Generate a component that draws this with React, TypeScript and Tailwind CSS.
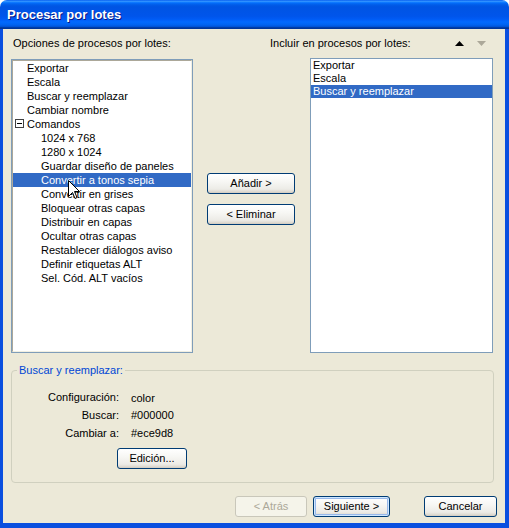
import React from "react";

const leftItems: { label: string; level: number; tree?: boolean; selected?: boolean }[] = [
  { label: "Exportar", level: 0 },
  { label: "Escala", level: 0 },
  { label: "Buscar y reemplazar", level: 0 },
  { label: "Cambiar nombre", level: 0 },
  { label: "Comandos", level: 0, tree: true },
  { label: "1024 x 768", level: 1 },
  { label: "1280 x 1024", level: 1 },
  { label: "Guardar diseño de paneles", level: 1 },
  { label: "Convertir a tonos sepia", level: 1, selected: true },
  { label: "Convertir en grises", level: 1 },
  { label: "Bloquear otras capas", level: 1 },
  { label: "Distribuir en capas", level: 1 },
  { label: "Ocultar otras capas", level: 1 },
  { label: "Restablecer diálogos aviso", level: 1 },
  { label: "Definir etiquetas ALT", level: 1 },
  { label: "Sel. Cód. ALT vacíos", level: 1 },
];

const rightItems = [
  { label: "Exportar" },
  { label: "Escala" },
  { label: "Buscar y reemplazar", selected: true },
];

function XpButton({
  children,
  className = "",
  isDefault = false,
  disabled = false,
}: {
  children: React.ReactNode;
  className?: string;
  isDefault?: boolean;
  disabled?: boolean;
}) {
  if (disabled) {
    return (
      <div
        className={
          "h-[21px] flex items-center justify-center rounded-[3px] border border-[#c9c7ba] bg-[#f5f4ea] text-[#aca899] " +
          className
        }
      >
        {children}
      </div>
    );
  }
  return (
    <div
      className={
        "h-[21px] flex items-center justify-center rounded-[3px] border border-[#003c74] bg-[linear-gradient(180deg,#ffffff_0%,#f7f7f4_40%,#ecebe6_80%,#d6d0c5_100%)] text-black " +
        (isDefault ? "shadow-[inset_0_0_0_1px_#cee7ff,inset_0_0_0_2px_#98b8ea] " : "shadow-[inset_0_-1px_0_#d6d0c5] ") +
        className
      }
    >
      {children}
    </div>
  );
}

export default function App() {
  return (
    <div className="w-[509px] h-[528px] flex flex-col bg-white font-['Liberation_Sans',Arial,sans-serif] text-[11px] leading-[13px] text-black">
      {/* Title bar */}
      <div className="h-[29px] shrink-0 rounded-t-[7px] flex items-center pl-[7px] bg-[linear-gradient(180deg,#0058ee_0%,#3593ff_4%,#288eff_6%,#127dff_8%,#036ffc_10%,#0262ee_14%,#0057e5_20%,#0054e3_24%,#0055eb_56%,#005bf5_66%,#026afe_76%,#0062ef_86%,#0052d6_92%,#0040ab_94%,#003092_100%)]">
        <span className="text-white font-bold text-[13px] leading-[16px] [text-shadow:1px_1px_0_#0a1883] pt-[1px]">
          Procesar por lotes
        </span>
      </div>

      {/* Body */}
      <div className="flex-1 flex flex-col bg-[#ece9d8] border-l-[3px] border-r-[4px] border-b-[5px] border-[#0a4fdf]">
        {/* Labels row */}
        <div className="h-[29px] shrink-0 flex items-center pl-[8px]">
          <div className="w-[259px] pl-[2px]">Opciones de procesos por lotes:</div>
          <div>Incluir en procesos por lotes:</div>
          <div className="ml-auto mr-[19px] flex items-center gap-[13px]">
            <svg width="9" height="5" viewBox="0 0 9 5">
              <path d="M4.5 0 L9 5 L0 5 Z" fill="#000" />
            </svg>
            <svg width="9" height="5" viewBox="0 0 9 5">
              <path d="M0 0 L9 0 L4.5 5 Z" fill="#aca899" />
            </svg>
          </div>
        </div>

        {/* Lists row */}
        <div className="h-[296px] shrink-0 flex pl-[8px]">
          <div className="w-[182px] h-[294px] mt-[1px] border border-[#7f9db9] bg-white">
            <div className="relative h-full border border-t-[#aca899] border-l-[#aca899] border-b-[#f1efe2] border-r-[#f1efe2]">
              {leftItems.map((it) => (
                <div
                  key={it.label}
                  className={
                    "relative h-[14px] leading-[14px] whitespace-nowrap " +
                    (it.selected ? "bg-[#316ac5] text-white " : "") +
                    (it.level === 0 ? "pl-[14px]" : "pl-[28px]")
                  }
                >
                  {it.tree && (
                    <span className="absolute left-[2px] top-[2px] w-[9px] h-[9px] border border-[#404040] bg-white flex items-center justify-center">
                      <span className="w-[5px] h-[1px] bg-black" />
                    </span>
                  )}
                  {it.label}
                </div>
              ))}
              {/* mouse cursor */}
              <svg
                className="absolute left-[55px] top-[119px]"
                width="12"
                height="20"
                viewBox="0 0 12 20"
              >
                <path
                  d="M0.5 0.5 L0.5 16.5 L4.5 12.5 L7 18.5 L9 17.5 L6.5 11.5 L11.5 11.5 Z"
                  fill="#ffffff"
                  stroke="#000000"
                  strokeWidth="1"
                />
              </svg>
            </div>
          </div>

          <div className="w-[117px] pl-[14px] pt-[115px] flex flex-col gap-[10px]">
            <XpButton className="w-[88px]">Añadir &gt;</XpButton>
            <XpButton className="w-[88px]">&lt; Eliminar</XpButton>
          </div>

          <div className="w-[183px] h-[295px] border border-[#7f9db9] bg-white">
            {rightItems.map((it) => (
              <div
                key={it.label}
                className={
                  "h-[13px] leading-[13px] pl-[2px] whitespace-nowrap " +
                  (it.selected ? "bg-[#316ac5] text-white" : "")
                }
              >
                {it.label}
              </div>
            ))}
          </div>
        </div>

        {/* Group box */}
        <fieldset className="ml-[8px] mt-[10px] w-[483px] h-[119px] shrink-0 border border-[#d0d0bf] rounded-[4px]">
          <legend className="ml-[5px] px-[2px] text-[#0046d5] leading-[13px]">Buscar y reemplazar:</legend>
          <div className="mt-[12px] h-[17px] flex items-center">
            <div className="w-[107px] text-right">Configuración:</div>
            <div className="ml-[12px] pt-[2px]">color</div>
          </div>
          <div className="h-[18px] flex items-center">
            <div className="w-[107px] text-right">Buscar:</div>
            <div className="ml-[12px]">#000000</div>
          </div>
          <div className="h-[18px] flex items-center">
            <div className="w-[107px] text-right">Cambiar a:</div>
            <div className="ml-[12px]">#ece9d8</div>
          </div>
          <div className="mt-[6px] ml-[105px]">
            <XpButton className="w-[70px]">Edición...</XpButton>
          </div>
        </fieldset>

        {/* Bottom buttons */}
        <div className="mt-[13px] flex pl-[232px]">
          <XpButton disabled className="w-[72px]">&lt; Atrás</XpButton>
          <XpButton isDefault className="w-[77px] ml-[6px]">Siguiente &gt;</XpButton>
          <XpButton className="w-[73px] ml-[34px]">Cancelar</XpButton>
        </div>
      </div>
    </div>
  );
}
